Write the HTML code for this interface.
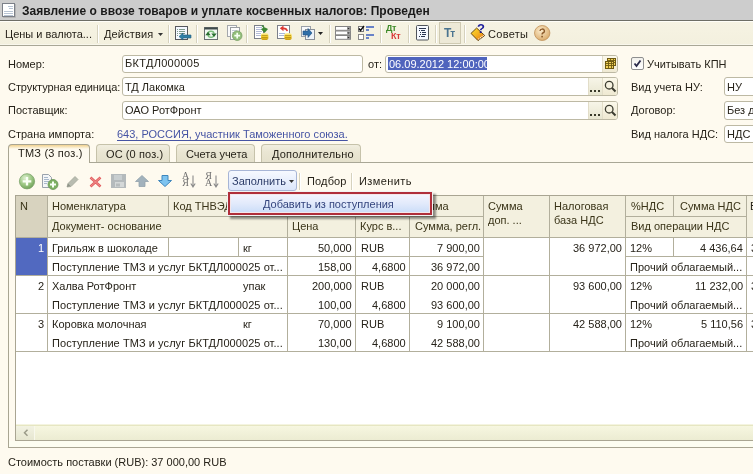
<!DOCTYPE html><html><head><meta charset="utf-8"><style>
*{margin:0;padding:0;box-sizing:border-box}
html,body{width:753px;height:474px;overflow:hidden}
body{position:relative;background:#FEFAEF;font-family:"Liberation Sans",sans-serif;font-size:11px;color:#27231A}
.t{position:absolute;white-space:nowrap;font-size:11px;line-height:13px;will-change:transform}
.a{position:absolute;will-change:transform}
svg{position:absolute;overflow:visible}
</style></head><body><div style="position:absolute;left:0px;top:0px;width:753px;height:20px;background:#CDCDCD"></div>
<div style="position:absolute;left:0px;top:20px;width:753px;height:1px;background:#6E6E66"></div>
<svg style="left:2px;top:3px" width="14" height="15" viewBox="0 0 14 15"><rect x="0.5" y="0.5" width="12" height="13" fill="#FFFFFF" stroke="#7C8088"/><rect x="1" y="14" width="12.5" height="1" fill="#B4B4B4"/><rect x="13" y="1" width="1" height="13.5" fill="#B4B4B4"/><path d="M6 3.5h5M7 5.5h4M2 8.5h9M2 10.5h9M2 12.5h9" stroke="#B8C4D4" stroke-width="1"/></svg>
<div class="t" style="left:22px;top:4px;font-weight:bold;font-size:12px;line-height:14px;color:#1a1a1a;letter-spacing:0.04px">Заявление о ввозе товаров и уплате косвенных налогов: Проведен</div>
<div style="position:absolute;left:0px;top:21px;width:753px;height:1px;background:#FFFEF8"></div>
<div style="position:absolute;left:0px;top:22px;width:753px;height:22px;background:linear-gradient(#F6F3E3,#F3F0DE)"></div>
<div style="position:absolute;left:0px;top:44px;width:753px;height:1px;background:#F9F7EC"></div>
<div style="position:absolute;left:0px;top:45px;width:753px;height:1px;background:#A9A796"></div>
<div class="t" style="left:5px;top:28px;">Цены и валюта...</div>
<div style="position:absolute;left:97px;top:25px;width:1px;height:18px;background:#D6D2BE"></div>
<div style="position:absolute;left:98px;top:25px;width:1px;height:18px;background:#FFFFFF"></div>
<div class="t" style="left:104px;top:28px;letter-spacing:0.15px">Действия</div>
<svg style="left:158px;top:33px" width="6" height="4"><path d="M0 0h5L2.5 3z" fill="#333"/></svg>
<div style="position:absolute;left:168px;top:25px;width:1px;height:18px;background:#D6D2BE"></div>
<div style="position:absolute;left:169px;top:25px;width:1px;height:18px;background:#FFFFFF"></div>
<div style="position:absolute;left:196px;top:25px;width:1px;height:18px;background:#D6D2BE"></div>
<div style="position:absolute;left:197px;top:25px;width:1px;height:18px;background:#FFFFFF"></div>
<div style="position:absolute;left:246px;top:25px;width:1px;height:18px;background:#D6D2BE"></div>
<div style="position:absolute;left:247px;top:25px;width:1px;height:18px;background:#FFFFFF"></div>
<div style="position:absolute;left:329px;top:25px;width:1px;height:18px;background:#D6D2BE"></div>
<div style="position:absolute;left:330px;top:25px;width:1px;height:18px;background:#FFFFFF"></div>
<div style="position:absolute;left:380px;top:25px;width:1px;height:18px;background:#D6D2BE"></div>
<div style="position:absolute;left:381px;top:25px;width:1px;height:18px;background:#FFFFFF"></div>
<div style="position:absolute;left:408px;top:25px;width:1px;height:18px;background:#D6D2BE"></div>
<div style="position:absolute;left:409px;top:25px;width:1px;height:18px;background:#FFFFFF"></div>
<div style="position:absolute;left:435px;top:25px;width:1px;height:18px;background:#D6D2BE"></div>
<div style="position:absolute;left:436px;top:25px;width:1px;height:18px;background:#FFFFFF"></div>
<div style="position:absolute;left:464px;top:25px;width:1px;height:18px;background:#D6D2BE"></div>
<div style="position:absolute;left:465px;top:25px;width:1px;height:18px;background:#FFFFFF"></div>
<div class="t" style="left:488px;top:28px;letter-spacing:0.3px">Советы</div>
<svg style="left:175px;top:26px" width="17" height="15" viewBox="0 0 17 15"><rect x="0.5" y="0.5" width="12" height="13" fill="#F4F8FF" stroke="#56585C"/><path d="M2 3.5h1M4 3.5h6M2 5.5h1M4 5.5h6M2 7.5h1M4 7.5h6M2 9.5h1" stroke="#7F9C8C"/><path d="M4 10.5L8 7V9H16V12H8V14Z" fill="#2F7FA6" stroke="#245F80" stroke-width="0.6"/></svg>
<svg style="left:204px;top:27px" width="14" height="13" viewBox="0 0 14 13"><rect x="0.5" y="0.5" width="13" height="12" fill="#F2F8F2" stroke="#6A7070"/><rect x="0.5" y="0.5" width="13" height="2" fill="#3E4A4A"/><path d="M4 7A3 2.6 0 0 1 10 6.5" fill="none" stroke="#7CC07C" stroke-width="1.5"/><path d="M10 7.5A3 2.6 0 0 1 4 8" fill="none" stroke="#7CC07C" stroke-width="1.5"/><path d="M1.3 8.2L4 4.8L6.7 8.2Z M7.3 6.6L10 10L12.7 6.6Z" fill="#2A6E30"/></svg>
<svg style="left:227px;top:25px" width="16" height="16" viewBox="0 0 16 16"><rect x="0.5" y="0.5" width="9" height="11" fill="#FAFAFA" stroke="#A4A8AC"/><rect x="3.5" y="2.5" width="9" height="12" fill="#FCFCFC" stroke="#9A9EA2"/><path d="M5 5.5h5M5 7.5h4" stroke="#C4CCD8"/><circle cx="10.2" cy="10.7" r="4.8" fill="#92BE7A" stroke="#78A064" stroke-width="0.8"/><path d="M10.2 7.8v5.8M7.3 10.7h5.8" stroke="#F6FFF2" stroke-width="1.7"/></svg>
<svg style="left:254px;top:25px" width="16" height="16" viewBox="0 0 16 16"><defs><linearGradient id="cg" x1="0" y1="0" x2="0" y2="1"><stop offset="0" stop-color="#FFF3A0"/><stop offset="0.5" stop-color="#F0CC30"/><stop offset="1" stop-color="#C89A10"/></linearGradient></defs><rect x="0.5" y="0.5" width="9" height="13" fill="#FFFFFF" stroke="#7C808A"/><path d="M2 2.5h6M2 4.5h6M2 6.5h6M2 8.5h5M2 10.5h5" stroke="#B4BCD8"/><path d="M8 0.5L10 2.5" stroke="#3E8A34" stroke-width="1.4"/><path d="M7 4L10.5 2.2L14 4L10.5 8Z" fill="#3C8532"/><rect x="6.999999999999999" y="8" width="7.4" height="7" rx="3" ry="2" fill="url(#cg)"/><path d="M7.699999999999999 10.5h6M7.699999999999999 12.5h6" stroke="#B08A10" stroke-width="0.7"/></svg>
<svg style="left:277px;top:25px" width="16" height="16" viewBox="0 0 16 16"><defs><linearGradient id="cg" x1="0" y1="0" x2="0" y2="1"><stop offset="0" stop-color="#FFF3A0"/><stop offset="0.5" stop-color="#F0CC30"/><stop offset="1" stop-color="#C89A10"/></linearGradient></defs><rect x="0.5" y="0.5" width="12" height="13" fill="#FFFFFF" stroke="#7C808A"/><path d="M2 8.5h6M2 10.5h6" stroke="#A8B8D8"/><path d="M2.8 3.3L6.5 0.5V2.4C9 2.4 10.5 3.5 11 6L9.6 6.2C9 5 8 4.2 6.5 4.2V6.3Z" fill="#DC3A34"/><rect x="7.3" y="8" width="7.4" height="7" rx="3" ry="2" fill="url(#cg)"/><path d="M8 10.5h6M8 12.5h6" stroke="#B08A10" stroke-width="0.7"/></svg>
<svg style="left:301px;top:26px" width="15" height="15" viewBox="0 0 15 15"><rect x="0.5" y="0.5" width="9" height="10" fill="#F7F9FC" stroke="#9AA0A8"/><rect x="4.5" y="3.5" width="9" height="10" fill="#EEF4FA" stroke="#8A9098"/><path d="M2 5h5V2.5L11 7L7 11.5V9H2Z" fill="#2F6FA8" stroke="#1F4F80" stroke-width="0.6"/></svg>
<svg style="left:318px;top:32px" width="5" height="3" viewBox="0 0 5 3"><path d="M0 0h5L2.5 3z" fill="#222"/></svg>
<svg style="left:335px;top:26px" width="16" height="14" viewBox="0 0 16 14"><rect x="0.5" y="0.5" width="15" height="3.8" fill="#fff" stroke="#858585"/><rect x="0.5" y="5" width="15" height="3.8" fill="#fff" stroke="#858585"/><rect x="0.5" y="9.5" width="15" height="3.8" fill="#fff" stroke="#858585"/><rect x="12" y="1" width="3" height="3" fill="#9A9A9A"/><rect x="12" y="5.5" width="3" height="3" fill="#9A9A9A"/><rect x="12" y="10" width="3" height="3" fill="#9A9A9A"/><path d="M12.5 2h2l-1 1.2zM12.5 6.5h2l-1 1.2zM12.5 11h2l-1 1.2z" fill="#222"/></svg>
<svg style="left:358px;top:26px" width="17" height="14" viewBox="0 0 17 14"><rect x="0.5" y="0.5" width="5" height="5" fill="#fff" stroke="#777"/><path d="M1 2.5L2.5 4.5L6 0" fill="none" stroke="#111" stroke-width="1.4"/><rect x="0.5" y="8.5" width="5" height="5" fill="#fff" stroke="#888"/><path d="M8 1h8M8 4h3M8 9h8M8 12h3" stroke="#3A5EC0" stroke-width="1.5"/></svg>
<div class="a" style="left:386px;top:24px;font:bold 9px/9px 'Liberation Sans';color:#3C8A28;letter-spacing:-0.3px">Дт</div>
<div class="a" style="left:391px;top:32px;font:bold 9px/9px 'Liberation Sans';color:#D83A3A;letter-spacing:-0.3px">Кт</div>
<svg style="left:416px;top:25px" width="14" height="16" viewBox="0 0 14 16"><rect x="0.5" y="0.5" width="12" height="14.5" rx="1" fill="#F6F9FF" stroke="#50545A"/><path d="M3 3.5h7M3 5.5h1M5 5.5h4M4 7.5h1M6 7.5h4M4 9.5h1M6 9.5h4M3 11.5h1M5 11.5h4" stroke="#2A3550"/></svg>
<div style="position:absolute;left:439px;top:22px;width:22px;height:22px;background:#EDE9D7;border:1px solid #CFCAB2"></div>
<div class="a" style="left:444px;top:27px;font:bold 12px/12px 'Liberation Sans';color:#4A7490;letter-spacing:-1px">Т<span style="font-size:10px">т</span></div>
<svg style="left:468px;top:22px" width="20" height="22" viewBox="0 0 20 22"><defs><linearGradient id="bk" x1="0" y1="0" x2="1" y2="1"><stop offset="0" stop-color="#F8E030"/><stop offset="0.5" stop-color="#F4B020"/><stop offset="1" stop-color="#E06A18"/></linearGradient></defs><path d="M3 11.4L8.6 6L16.7 13.5L10 18.6Z" fill="url(#bk)" stroke="#5A3A08" stroke-width="0.9"/><path d="M10.5 17.3L15.8 13.2" stroke="#FFFFFF" stroke-width="1.2" stroke-dasharray="1 1"/></svg>
<div class="a" style="left:477px;top:22px;font:bold 13px/13px 'Liberation Sans';color:#1A1A9A">?</div>
<svg style="left:534px;top:25px" width="17" height="16" viewBox="0 0 17 16"><defs><radialGradient id="qg" cx="0.4" cy="0.35" r="0.7"><stop offset="0" stop-color="#FBEBCB"/><stop offset="1" stop-color="#D9A968"/></radialGradient></defs><ellipse cx="8.2" cy="8" rx="7.7" ry="7.5" fill="url(#qg)" stroke="#C09058" stroke-width="0.8"/><path d="M6 6a2.2 2 0 1 1 2.8 2c-.6.3 -.7 .7 -.7 1.5" fill="none" stroke="#8C5A2A" stroke-width="1.4"/><rect x="7.3" y="10.8" width="1.6" height="1.6" fill="#8C5A2A"/></svg>
<div class="t" style="left:8px;top:58px;">Номер:</div>
<div class="t" style="left:8px;top:81px;letter-spacing:-0.06px">Структурная единица:</div>
<div class="t" style="left:8px;top:104px;">Поставщик:</div>
<div class="t" style="left:8px;top:128px;">Страна импорта:</div>
<div style="position:absolute;left:122px;top:55px;width:241px;height:18px;background:#FFFFFF;border:1px solid #BDB9A4;border-radius:3px"></div>
<div class="t" style="left:125px;top:57px;letter-spacing:0.3px">БКТДЛ000005</div>
<div class="t" style="left:368px;top:58px;">от:</div>
<div style="position:absolute;left:385px;top:55px;width:233px;height:18px;background:#FFFFFF;border:1px solid #BDB9A4;border-radius:3px"></div>
<div style="position:absolute;left:388px;top:57px;width:99px;height:13px;background:#4F64BD"></div>
<div class="t" style="left:389px;top:58px;width:98px;overflow:hidden;color:#fff">06.09.2012 12:00:00</div>
<div style="position:absolute;left:122px;top:77px;width:496px;height:19px;background:#FFFFFF;border:1px solid #BDB9A4;border-radius:3px"></div>
<div class="t" style="left:125px;top:81px;">ТД Лакомка</div>
<div style="position:absolute;left:122px;top:101px;width:496px;height:19px;background:#FFFFFF;border:1px solid #BDB9A4;border-radius:3px"></div>
<div class="t" style="left:125px;top:104px;">ОАО РотФронт</div>
<div style="position:absolute;left:602px;top:56px;width:15px;height:16px;background:linear-gradient(#FBF8EA,#EFE9D2);border-left:1px solid #E2DDC8;border-radius:0 2px 2px 0"></div>
<svg style="left:605px;top:58px" width="11" height="11" viewBox="0 0 11 11"><rect x="2.5" y="0.5" width="8" height="7" fill="#F2D25A" stroke="#6E5A12"/><path d="M2.5 2.5h8M2.5 4.5h8M5.5 0.5v7M8.5 0.5v7" stroke="#6E5A12" stroke-width="0.9"/><rect x="0.5" y="3.5" width="8" height="7" fill="#F2D25A" stroke="#6E5A12"/><path d="M0.5 5.5h8M0.5 7.5h8M3.5 3.5v7M6.5 3.5v7" stroke="#6E5A12" stroke-width="0.9"/></svg>
<div style="position:absolute;left:588px;top:78px;width:14px;height:17px;background:linear-gradient(#F7F5E8,#E8E6D0);border-left:1px solid #E2DDC8"></div>
<div style="position:absolute;left:602px;top:78px;width:15px;height:17px;background:linear-gradient(#FBF8EA,#EFE9D2);border-left:1px solid #E2DDC8;border-radius:0 2px 2px 0"></div>
<svg style="left:590px;top:90px" width="10" height="3" viewBox="0 0 10 3"><rect x="0" y="0" width="2" height="2" fill="#3A3A2A"/><rect x="4" y="0" width="2" height="2" fill="#3A3A2A"/><rect x="8" y="0" width="2" height="2" fill="#3A3A2A"/></svg>
<svg style="left:604px;top:80px" width="13" height="13" viewBox="0 0 13 13"><circle cx="5.2" cy="5.2" r="3.8" fill="none" stroke="#3C3C30" stroke-width="1.3"/><path d="M8 8L11.5 11.5" stroke="#3C3C30" stroke-width="2"/></svg>
<div style="position:absolute;left:588px;top:102px;width:14px;height:17px;background:linear-gradient(#F7F5E8,#E8E6D0);border-left:1px solid #E2DDC8"></div>
<div style="position:absolute;left:602px;top:102px;width:15px;height:17px;background:linear-gradient(#FBF8EA,#EFE9D2);border-left:1px solid #E2DDC8;border-radius:0 2px 2px 0"></div>
<svg style="left:590px;top:114px" width="10" height="3" viewBox="0 0 10 3"><rect x="0" y="0" width="2" height="2" fill="#3A3A2A"/><rect x="4" y="0" width="2" height="2" fill="#3A3A2A"/><rect x="8" y="0" width="2" height="2" fill="#3A3A2A"/></svg>
<svg style="left:604px;top:104px" width="13" height="13" viewBox="0 0 13 13"><circle cx="5.2" cy="5.2" r="3.8" fill="none" stroke="#3C3C30" stroke-width="1.3"/><path d="M8 8L11.5 11.5" stroke="#3C3C30" stroke-width="2"/></svg>
<div class="t" style="left:117px;top:128px;color:#4654A4;text-decoration:underline;text-underline-offset:2px">643, РОССИЯ, участник Таможенного союза.</div>
<div style="position:absolute;left:631px;top:57px;width:13px;height:13px;background:linear-gradient(#F2F1EC,#FFFFFF);border:1px solid #8E8F8F;border-radius:2px"></div>
<svg style="left:633px;top:59px" width="9" height="9"><path d="M1.5 4.5L3.5 7L7.5 1.5" fill="none" stroke="#2A2A4A" stroke-width="1.8"/></svg>
<div class="t" style="left:647px;top:58px;">Учитывать КПН</div>
<div class="t" style="left:631px;top:81px;">Вид учета НУ:</div>
<div class="t" style="left:631px;top:104px;">Договор:</div>
<div class="t" style="left:631px;top:128px;">Вид налога НДС:</div>
<div style="position:absolute;left:724px;top:77px;width:40px;height:19px;background:#FFFFFF;border:1px solid #BDB9A4;border-radius:3px"></div>
<div class="t" style="left:727px;top:81px;">НУ</div>
<div style="position:absolute;left:724px;top:101px;width:40px;height:19px;background:#FFFFFF;border:1px solid #BDB9A4;border-radius:3px"></div>
<div class="t" style="left:727px;top:104px;">Без д</div>
<div style="position:absolute;left:724px;top:125px;width:40px;height:18px;background:#FFFFFF;border:1px solid #BDB9A4;border-radius:3px"></div>
<div class="t" style="left:727px;top:128px;">НДС</div>
<div style="position:absolute;left:8px;top:162px;width:745px;height:1px;background:#A9A796"></div>
<div style="position:absolute;left:96px;top:144px;width:74px;height:18px;background:linear-gradient(#F1EEE0,#EAE6D3 40%,#E5E1CC);border:1px solid #C6C2AA;border-bottom:none;border-radius:4px 4px 0 0"></div>
<div style="position:absolute;left:176px;top:144px;width:79px;height:18px;background:linear-gradient(#F1EEE0,#EAE6D3 40%,#E5E1CC);border:1px solid #C6C2AA;border-bottom:none;border-radius:4px 4px 0 0"></div>
<div style="position:absolute;left:261px;top:144px;width:100px;height:18px;background:linear-gradient(#F1EEE0,#EAE6D3 40%,#E5E1CC);border:1px solid #C6C2AA;border-bottom:none;border-radius:4px 4px 0 0"></div>
<div style="position:absolute;left:8px;top:144px;width:82px;height:19px;background:linear-gradient(#F1D28F 0px,#F8E7C0 2px,#FEFAEF 4px);border:1px solid #A9A592;border-bottom:none;border-radius:4px 4px 0 0"></div>
<div class="t" style="left:18px;top:147px;letter-spacing:0.2px">ТМЗ (3 поз.)</div>
<div class="t" style="left:106px;top:148px;letter-spacing:0.1px">ОС (0 поз.)</div>
<div class="t" style="left:186px;top:148px;">Счета учета</div>
<div class="t" style="left:272px;top:148px;letter-spacing:0.2px">Дополнительно</div>
<div style="position:absolute;left:8px;top:162px;width:1px;height:286px;background:#A9A592"></div>
<div style="position:absolute;left:8px;top:447px;width:745px;height:1px;background:#A9A592"></div>
<div style="position:absolute;left:299px;top:173px;width:1px;height:17px;background:#D6D2BE"></div>
<div style="position:absolute;left:300px;top:173px;width:1px;height:17px;background:#FFFFFF"></div>
<div style="position:absolute;left:351px;top:173px;width:1px;height:17px;background:#D6D2BE"></div>
<div style="position:absolute;left:352px;top:173px;width:1px;height:17px;background:#FFFFFF"></div>
<svg style="left:19px;top:173px" width="17" height="17" viewBox="0 0 17 17"><defs><radialGradient id="gg" cx="0.38" cy="0.3" r="0.75"><stop offset="0" stop-color="#DDF0CF"/><stop offset="0.6" stop-color="#98C47F"/><stop offset="1" stop-color="#6E9F58"/></radialGradient></defs><circle cx="8" cy="8.3" r="7.6" fill="url(#gg)" stroke="#7AA268" stroke-width="0.8"/><path d="M8 4v8.6M3.7 8.3h8.6" stroke="#FAFFF6" stroke-width="2.3"/></svg>
<svg style="left:42px;top:174px" width="18" height="16" viewBox="0 0 18 16"><path d="M0.5 0.5h6l3 3v10h-9z" fill="#F4F6F8" stroke="#9AA2AC"/><path d="M2 3.5h4M2 5.5h5M2 7.5h5M2 9.5h3" stroke="#A8B8CC"/><circle cx="11" cy="10.5" r="5" fill="#7DB060" stroke="#6A9458" stroke-width="0.8"/><path d="M11 7.5v6M8 10.5h6" stroke="#F8FFF4" stroke-width="2"/></svg>
<svg style="left:66px;top:175px" width="14" height="13" viewBox="0 0 14 13"><path d="M1 12L2 8.5L9 1.5L12 4.5L5 11.5Z" fill="#B8BCB0" stroke="#A2A698" stroke-width="0.8"/><path d="M1 12L2 8.5L4.5 11Z" fill="#8F9488"/></svg>
<svg style="left:89px;top:176px" width="13" height="12" viewBox="0 0 13 12"><path d="M1.5 1.5L11.5 10.5M11.5 1.5L1.5 10.5" stroke="#E26060" stroke-width="2.6"/><path d="M1.5 1.5L11.5 10.5M11.5 1.5L1.5 10.5" stroke="#F29A9A" stroke-width="0.8"/></svg>
<svg style="left:111px;top:174px" width="15" height="14" viewBox="0 0 15 14"><rect x="0" y="0" width="15" height="14" fill="#B4BABC"/><rect x="3" y="1" width="8" height="5" fill="#C8CED0"/><rect x="4" y="8" width="9" height="5" fill="#D4D8D8"/><path d="M6 9.5v3M8 9.5v3" stroke="#9AA0A2"/></svg>
<svg style="left:135px;top:175px" width="14" height="12" viewBox="0 0 14 12"><path d="M7 0.5L13.5 6.5H10V11.5H4V6.5H0.5Z" fill="#A2B2BC" stroke="#92A2AC" stroke-width="0.8"/></svg>
<svg style="left:158px;top:175px" width="14" height="12" viewBox="0 0 14 12"><path d="M4 0.5H10V5.5H13.5L7 11.5L0.5 5.5H4Z" fill="#7EC4F0" stroke="#3F86BC" stroke-width="1"/></svg>
<div class="a" style="left:181px;top:172px;font:10px/7px 'Liberation Serif';color:#707070;text-align:center;width:9px">А<br>Я</div>
<svg style="left:190px;top:175px" width="6" height="13" viewBox="0 0 6 13"><path d="M3 0.5v11M0.8 8.5L3 12L5.2 8.5" fill="none" stroke="#8A8A8A" stroke-width="1.1"/></svg>
<div class="a" style="left:204px;top:172px;font:10px/7px 'Liberation Serif';color:#707070;text-align:center;width:9px">Я<br>А</div>
<svg style="left:213px;top:175px" width="6" height="13" viewBox="0 0 6 13"><path d="M3 0.5v11M0.8 8.5L3 12L5.2 8.5" fill="none" stroke="#8A8A8A" stroke-width="1.1"/></svg>
<div class="t" style="left:307px;top:175px;letter-spacing:0.15px">Подбор</div>
<div class="t" style="left:359px;top:175px;letter-spacing:0.4px">Изменить</div>
<div style="position:absolute;left:15px;top:195px;width:738px;height:246px;background:#FFFFFF;border:1px solid #A9A592;border-right:none"></div>
<div style="position:absolute;left:16px;top:196px;width:737px;height:41px;background:#F3F0DF"></div>
<div style="position:absolute;left:16px;top:196px;width:31px;height:41px;background:#D8D3BF"></div>
<div style="position:absolute;left:16px;top:237px;width:737px;height:1px;background:#B2AF9C"></div>
<div style="position:absolute;left:47px;top:216px;width:436px;height:1px;background:#B2AF9C"></div>
<div style="position:absolute;left:625px;top:216px;width:121px;height:1px;background:#B2AF9C"></div>
<div style="position:absolute;left:47px;top:196px;width:1px;height:41px;background:#B2AF9C"></div>
<div style="position:absolute;left:483px;top:196px;width:1px;height:41px;background:#B2AF9C"></div>
<div style="position:absolute;left:549px;top:196px;width:1px;height:41px;background:#B2AF9C"></div>
<div style="position:absolute;left:625px;top:196px;width:1px;height:41px;background:#B2AF9C"></div>
<div style="position:absolute;left:746px;top:196px;width:1px;height:41px;background:#B2AF9C"></div>
<div style="position:absolute;left:168px;top:196px;width:1px;height:20px;background:#B2AF9C"></div>
<div style="position:absolute;left:409px;top:196px;width:1px;height:20px;background:#B2AF9C"></div>
<div style="position:absolute;left:673px;top:196px;width:1px;height:20px;background:#B2AF9C"></div>
<div style="position:absolute;left:287px;top:217px;width:1px;height:20px;background:#B2AF9C"></div>
<div style="position:absolute;left:355px;top:217px;width:1px;height:20px;background:#B2AF9C"></div>
<div style="position:absolute;left:409px;top:217px;width:1px;height:20px;background:#B2AF9C"></div>
<div class="t" style="left:20px;top:200px;color:#3A3418">N</div>
<div class="t" style="left:52px;top:200px;color:#3A3418">Номенклатура</div>
<div class="t" style="left:173px;top:200px;color:#3A3418">Код ТНВЭД</div>
<div class="t" style="left:52px;top:220px;color:#3A3418">Документ- основание</div>
<div class="t" style="left:292px;top:220px;color:#3A3418">Цена</div>
<div class="t" style="left:360px;top:220px;color:#3A3418">Курс в...</div>
<div class="t" style="left:415px;top:220px;color:#3A3418">Сумма, регл.</div>
<div class="t" style="left:488px;top:200px;color:#3A3418">Сумма</div>
<div class="t" style="left:414px;top:200px;color:#3A3418">Сумма</div>
<div class="t" style="left:488px;top:214px;color:#3A3418">доп. ...</div>
<div class="t" style="left:554px;top:200px;color:#3A3418">Налоговая</div>
<div class="t" style="left:554px;top:214px;color:#3A3418">база НДС</div>
<div class="t" style="left:631px;top:200px;color:#3A3418">%НДС</div>
<div class="t" style="left:680px;top:200px;color:#3A3418">Сумма НДС</div>
<div class="t" style="left:631px;top:220px;color:#3A3418">Вид операции НДС</div>
<div style="position:absolute;left:16px;top:275px;width:737px;height:1px;background:#B2AF9C"></div>
<div style="position:absolute;left:16px;top:313px;width:737px;height:1px;background:#B2AF9C"></div>
<div style="position:absolute;left:16px;top:351px;width:737px;height:1px;background:#B2AF9C"></div>
<div style="position:absolute;left:47px;top:238px;width:1px;height:113px;background:#B2AF9C"></div>
<div style="position:absolute;left:287px;top:238px;width:1px;height:113px;background:#B2AF9C"></div>
<div style="position:absolute;left:355px;top:238px;width:1px;height:113px;background:#B2AF9C"></div>
<div style="position:absolute;left:409px;top:238px;width:1px;height:113px;background:#B2AF9C"></div>
<div style="position:absolute;left:483px;top:238px;width:1px;height:113px;background:#B2AF9C"></div>
<div style="position:absolute;left:549px;top:238px;width:1px;height:113px;background:#B2AF9C"></div>
<div style="position:absolute;left:625px;top:238px;width:1px;height:113px;background:#B2AF9C"></div>
<div style="position:absolute;left:746px;top:238px;width:1px;height:113px;background:#B2AF9C"></div>
<div style="position:absolute;left:47px;top:256px;width:436px;height:1px;background:#B2AF9C"></div>
<div style="position:absolute;left:625px;top:256px;width:128px;height:1px;background:#B2AF9C"></div>
<div style="position:absolute;left:168px;top:238px;width:1px;height:18px;background:#B2AF9C"></div>
<div style="position:absolute;left:238px;top:238px;width:1px;height:18px;background:#B2AF9C"></div>
<div style="position:absolute;left:673px;top:238px;width:1px;height:18px;background:#B2AF9C"></div>
<div style="position:absolute;left:16px;top:238px;width:31px;height:37px;background:#5169C0"></div>
<div class="t" style="right:709px;top:242px;color:#fff">1</div>
<div class="t" style="right:709px;top:280px;">2</div>
<div class="t" style="right:709px;top:318px;">3</div>
<div class="t" style="left:52px;top:242px;">Грильяж в шоколаде</div>
<div class="t" style="left:243px;top:242px;">кг</div>
<div class="t" style="right:401px;top:242px;">50,000</div>
<div class="t" style="left:361px;top:242px;">RUB</div>
<div class="t" style="right:273px;top:242px;">7 900,00</div>
<div class="t" style="left:52px;top:261px;letter-spacing:0.07px">Поступление ТМЗ и услуг БКТДЛ000025 от...</div>
<div class="t" style="right:401px;top:261px;">158,00</div>
<div class="t" style="right:347px;top:261px;">4,6800</div>
<div class="t" style="right:273px;top:261px;">36 972,00</div>
<div class="t" style="right:131px;top:242px;">36 972,00</div>
<div class="t" style="left:630px;top:242px;">12%</div>
<div class="t" style="right:10px;top:242px;">4 436,64</div>
<div class="t" style="left:630px;top:261px;">Прочий облагаемый...</div>
<div class="t" style="left:52px;top:280px;">Халва РотФронт</div>
<div class="t" style="left:243px;top:280px;">упак</div>
<div class="t" style="right:401px;top:280px;">200,000</div>
<div class="t" style="left:361px;top:280px;">RUB</div>
<div class="t" style="right:273px;top:280px;">20 000,00</div>
<div class="t" style="left:52px;top:299px;letter-spacing:0.07px">Поступление ТМЗ и услуг БКТДЛ000025 от...</div>
<div class="t" style="right:401px;top:299px;">100,00</div>
<div class="t" style="right:347px;top:299px;">4,6800</div>
<div class="t" style="right:273px;top:299px;">93 600,00</div>
<div class="t" style="right:131px;top:280px;">93 600,00</div>
<div class="t" style="left:630px;top:280px;">12%</div>
<div class="t" style="right:10px;top:280px;">11 232,00</div>
<div class="t" style="left:630px;top:299px;">Прочий облагаемый...</div>
<div class="t" style="left:52px;top:318px;">Коровка молочная</div>
<div class="t" style="left:243px;top:318px;">кг</div>
<div class="t" style="right:401px;top:318px;">70,000</div>
<div class="t" style="left:361px;top:318px;">RUB</div>
<div class="t" style="right:273px;top:318px;">9 100,00</div>
<div class="t" style="left:52px;top:337px;letter-spacing:0.07px">Поступление ТМЗ и услуг БКТДЛ000025 от...</div>
<div class="t" style="right:401px;top:337px;">130,00</div>
<div class="t" style="right:347px;top:337px;">4,6800</div>
<div class="t" style="right:273px;top:337px;">42 588,00</div>
<div class="t" style="right:131px;top:318px;">42 588,00</div>
<div class="t" style="left:630px;top:318px;">12%</div>
<div class="t" style="right:10px;top:318px;">5 110,56</div>
<div class="t" style="left:630px;top:337px;">Прочий облагаемый...</div>
<div class="t" style="left:750px;top:200px;">В</div>
<div class="t" style="left:751px;top:242px;">3</div>
<div class="t" style="left:751px;top:280px;">3</div>
<div class="t" style="left:751px;top:318px;">3</div>
<div style="position:absolute;left:16px;top:424px;width:737px;height:16px;background:linear-gradient(#F8F8E2,#ECECD2)"></div>
<div style="position:absolute;left:16px;top:424px;width:737px;height:1px;background:#F4F4E0"></div>
<div style="position:absolute;left:16px;top:425px;width:737px;height:1px;background:#E6E6C2"></div>
<div style="position:absolute;left:9px;top:441px;width:744px;height:6px;background:#FDFDF1"></div>
<div style="position:absolute;left:8px;top:163px;width:1px;height:284px;background:#A9A592"></div>
<div style="position:absolute;left:16px;top:426px;width:19px;height:14px;background:linear-gradient(#F2F2E2,#E6E6D0);border-right:1px solid #F8F8EC"></div>
<svg style="left:23px;top:429px" width="6" height="8"><path d="M4.5 0.8L1.5 3.8L4.5 6.8" fill="none" stroke="#9A9A88" stroke-width="1.5"/></svg>
<div style="position:absolute;left:228px;top:170px;width:69px;height:21px;background:linear-gradient(#F6F9FF,#DCE6FA);border:1px solid #A7B5D6;border-radius:3px"></div>
<div class="t" style="left:232px;top:175px;color:#2A3A66">Заполнить</div>
<svg style="left:289px;top:180px" width="6" height="4"><path d="M0 0h5L2.5 3z" fill="#333"/></svg>
<div style="position:absolute;left:227px;top:191px;width:206px;height:25px;background:#F2F2F2;box-shadow:3px 3px 2px rgba(0,0,0,0.42)"></div>
<div style="position:absolute;left:228px;top:192px;width:204px;height:23px;background:linear-gradient(#F4F4FE,#E2EAFB 50%,#CADCF8);border:2px solid #B02E3A;box-shadow:inset 0 0 0 1px #F4E6EA"></div>
<div class="t" style="left:263px;top:198px;color:#34457E">Добавить из поступления</div>
<div class="t" style="left:8px;top:456px;">Стоимость поставки (RUB): 37 000,00 RUB</div></body></html>
